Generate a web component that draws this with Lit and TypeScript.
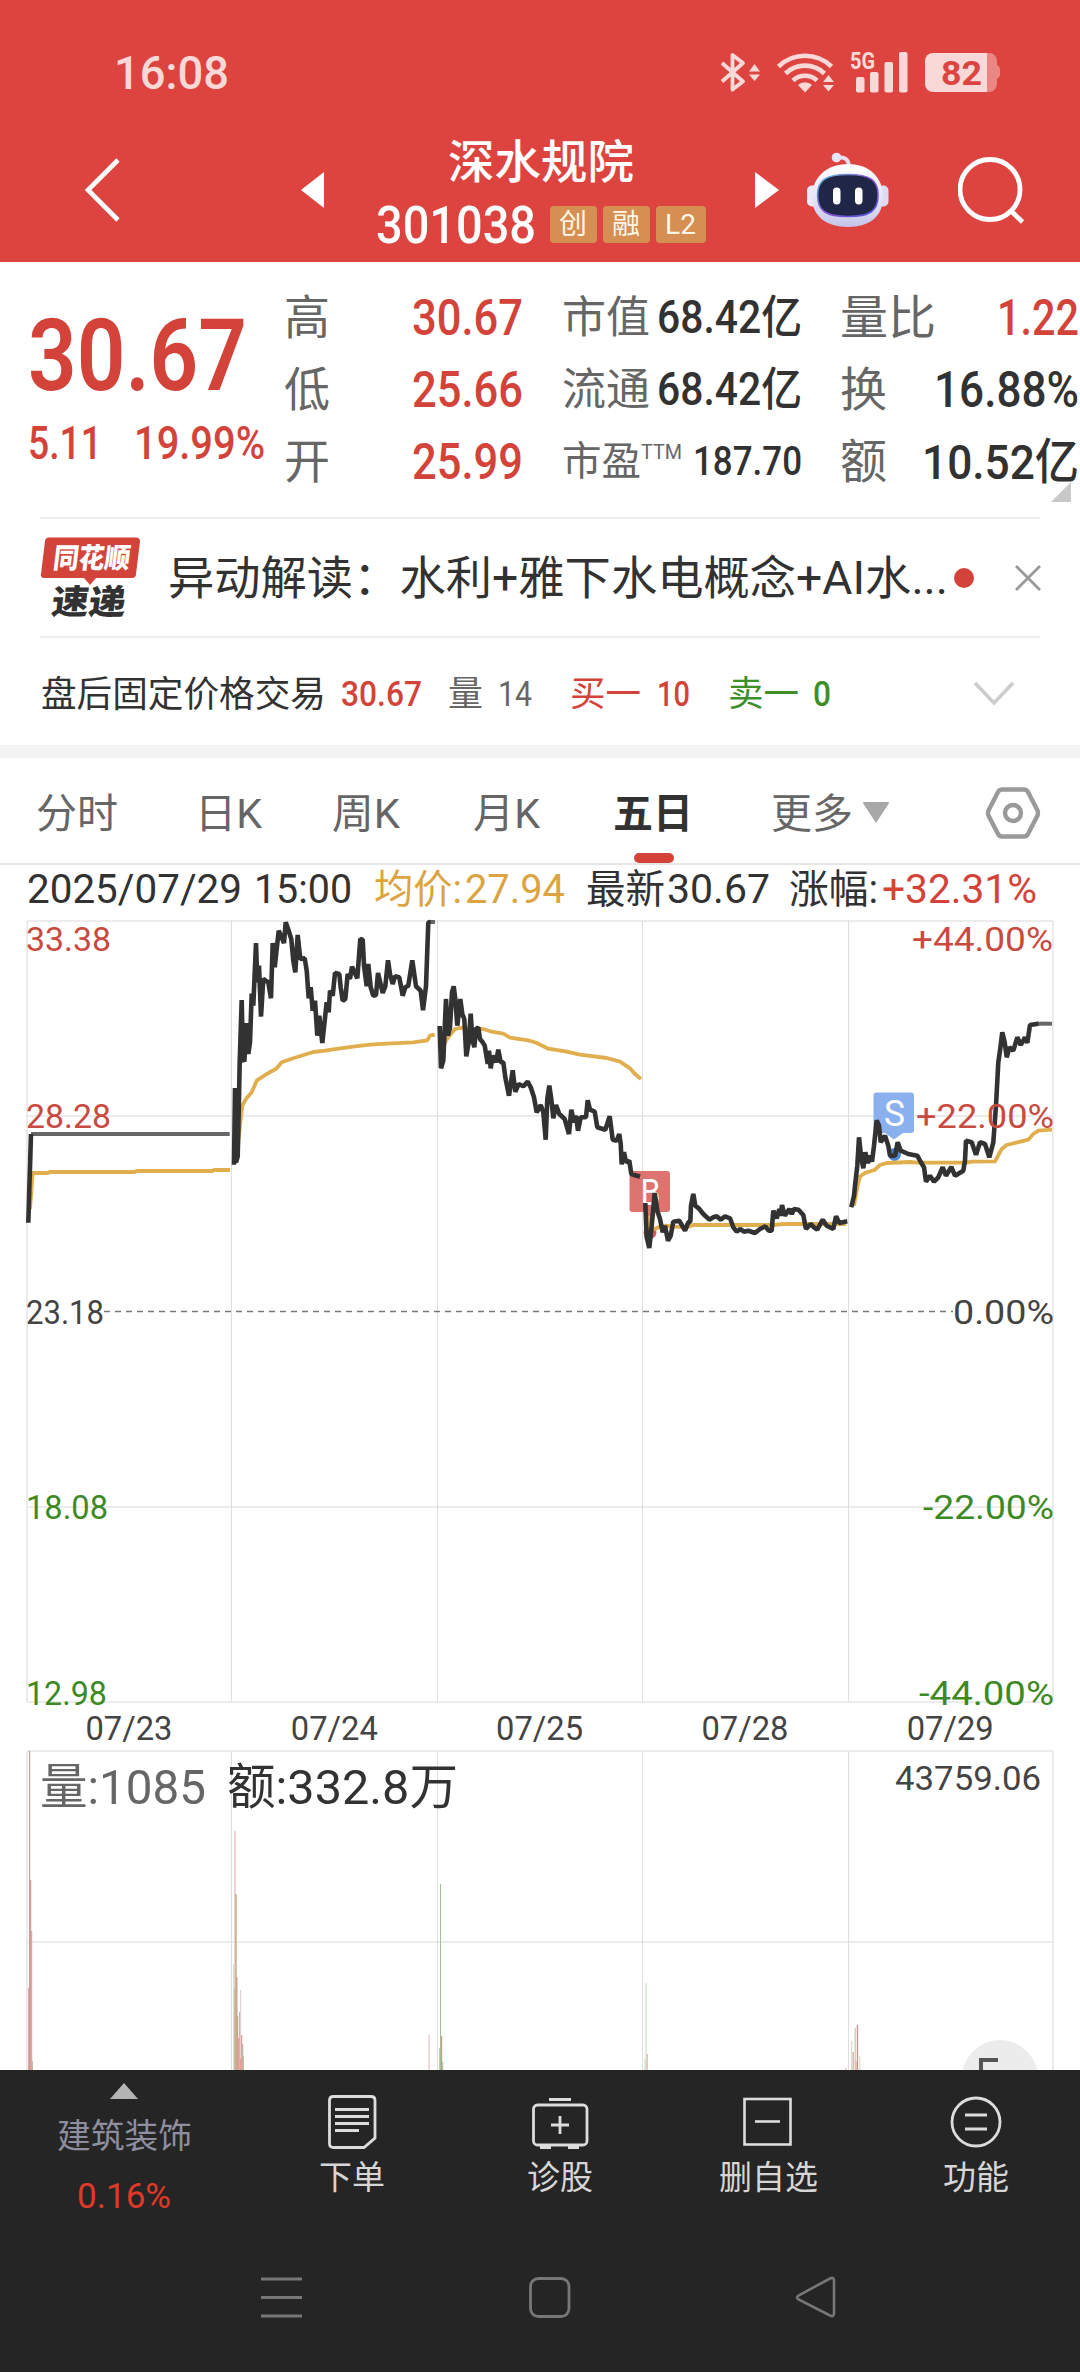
import { LitElement, html, svg, css } from "lit";
import { customElement } from "lit/decorators.js";

/** One line of text set to an exact advance width. */
const fit = (s: string, w: number, size: number, cls = "") => html`<svg class="fit ${cls}" width=${w} height=${size} viewBox="0 0 ${w} ${size}">
  <text x="0" y=${size * 0.855} font-size=${size} textLength=${w} lengthAdjust="spacingAndGlyphs">${s}</text>
</svg>`;

/** Samples are kept in thirds of a pixel, relative to an origin. */
const trace = (ox: number, oy: number, pts: string) =>
  pts
    .trim()
    .split(/\s+/)
    .map((p) => {
      const [x, y] = p.split(",").map(Number);
      return `${(ox + x / 3).toFixed(1)},${(oy + y / 3).toFixed(1)}`;
    })
    .join(" ");

const PRICE = [
  trace(0, 900, "85,971 93,705"),
  trace(0, 900, `702,797 705,567 708,790 713,772 715,700 719,490 725,303 729,480 733,488 740,372 745,465 750,430 752,370
    755,284 760,320 768,132 772,250 777,200 783,353 790,240 797,245 805,250 813,298 818,132 824,205 830,150 836,95
    852,132 857,70 866,95 874,120 880,185 886,220 893,108 901,180 914,178 920,215 926,298 932,265 938,335 945,305
    952,410 958,350 967,432 974,365 980,310 986,340 990,275 998,290 1005,222 1018,225 1022,265 1028,305 1036,300
    1043,225 1050,240 1056,203 1072,238 1081,120 1088,122 1092,200 1100,262 1105,195 1112,265 1120,290 1128,288
    1134,222 1148,282 1156,262 1164,184 1170,225 1178,255 1185,232 1198,235 1208,290 1216,265 1225,260 1237,184
    1248,262 1262,275 1269,334 1278,262 1285,70 1292,69`),
  trace(420, 900, `59,381 63,508 70,485 78,300 84,410 90,385 96,280 101,262 106,300 112,380 121,300 127,345 133,360
    139,472 146,430 152,344 157,420 163,445 168,390 175,385 180,420 188,430 194,440 203,495 207,455 212,508 218,470
    228,490 235,452 242,490 250,490 256,535 267,590 278,514 286,578 296,555 310,562 323,548 332,565 342,595 350,640
    362,618 370,640 377,722 382,600 388,560 394,600 400,658 408,618 418,645 434,660 447,705 454,632 462,670 468,650
    474,695 482,655 498,655 503,604 510,632 524,638 532,685 556,692 569,652 578,722 590,725 598,705 602,735 605,796
    612,760 618,790 628,785 634,825 660,833`),
  trace(420, 900, `676,912 680,1015 688,1047 695,980 704,882 712,935 720,960 728,1000 735,980 744,1025 752,1010
    760,968 778,965 795,995 805,970 811,968 813,920 820,885 826,920 836,928 850,945 868,962 880,955 890,952 902,962
    915,952 930,958 940,985 950,998 960,990 972,998 985,995 1005,1002 1020,990 1036,982 1046,995 1055,995 1060,935
    1070,958 1078,930 1082,950 1086,918 1094,950 1108,930 1115,945 1122,930 1135,932 1150,948 1158,990 1172,975
    1182,985 1192,992 1208,962 1220,980 1240,990 1248,952 1258,972 1282,967`),
  trace(780, 980, `214,685 222,650 225,620 232,560 237,475 243,530 250,568 256,520 264,552 272,530 276,548 282,500
    290,424 297,440 302,490 315,470 325,500 330,530 345,530 353,490 362,515 385,525 412,530 420,545 432,565 438,608
    450,590 462,608 475,595 488,565 498,590 514,564 525,590 550,575 555,545 558,485 575,490 588,527 600,490 615,495
    628,535 640,490 648,380 655,250 660,215 667,160 674,190 680,235 688,205 700,215 712,175 722,198 735,175 742,192
    750,138 775,134`),
];
const FLAT = [trace(0, 900, "93,705 689,705"), trace(0, 900, "1285,69 1305,69"), trace(780, 980, "770,134 816,134")];
const AVERAGE = [
  trace(0, 900, "90,930 98,822 144,822 148,819 404,819 410,816 636,816 642,813 690,813"),
  trace(0, 900, `716,720 720,680 727,620 738,600 755,580 770,545 800,525 830,508 845,490 880,478 940,459 975,455
    1020,448 1060,443 1110,437 1160,434 1240,430 1282,424 1290,410 1304,407`),
  trace(420, 900, `66,450 78,425 90,408 105,390 125,386 160,390 190,390 215,398 250,404 270,416 325,424 350,432
    385,449 440,458 480,467 560,477 600,488 630,508 645,525 663,540`),
  trace(420, 900, "685,950 690,985 705,990 715,985 735,980 760,983 800,985 820,978 1060,978 1090,975 1278,975"),
  trace(780, 980, `222,680 232,625 240,592 255,582 285,572 300,558 320,552 390,549 410,551 560,551 575,548 645,547
    665,510 680,498 745,482 760,465 775,455 816,452`),
];

/** x, width, top, colour */
const VOLUME: [number, number, number, string][] = [
  [28, 1.2, 1989, "#e2a9a7"], [29, 1.2, 1752, "#c79b9a"], [30, 1.2, 1881, "#dc9b98"], [31, 1.2, 1932, "#e2a5a2"], [32, 1, 2062, "#b5b9a8"],
  [233.3, 1, 1965, "#c5d6bf"], [234, 1.8, 1832, "#f0cfce"], [235.2, 1.5, 1895, "#bfae8d"], [234.2, 1.2, 1990, "#bdb793"],
  [236.4, 1, 1978, "#c98f80"], [237, 1.2, 2017, "#d0a385"], [238, 1.2, 2039, "#e5a19d"], [239.2, 1, 2013, "#d89a95"],
  [239.9, 1.3, 1991, "#e5cfd0"], [240, 2, 2060, "#ea9b98"], [241, 1.3, 2036, "#dfa09b"], [242.3, 1, 2045, "#a8ab92"], [243, 1, 2057, "#bfb6a3"],
  [428.3, 1.6, 2036, "#f0cfce"], [439.2, 1, 2049, "#a9c3a0"], [440, 1.1, 1885, "#a3c09a"], [441, 1.2, 2037, "#bf9f80"], [442, 1.2, 2063, "#a9c3a0"],
  [644.6, 1, 2060, "#b9cfb2"], [645.4, 1.3, 1984, "#cfdfc9"], [646.6, 1.2, 2055, "#e3b3a5"],
  [851.2, 1, 2042, "#c4dabd"], [852.6, 1.2, 2053, "#dba39c"], [854.6, 1.2, 2029, "#b9cfae"], [855.6, 1, 2062, "#e9a5a2"],
  [856.8, 1.3, 2026, "#c78f88"], [859.3, 1, 2057, "#c4dabd"], [845.5, 1, 2069, "#d9a9a7"],
];

const label = (x: number, cy: number, w: number, size: number, s: string, cls: string) =>
  svg`<text class=${cls} x=${x} y=${cy + size * 0.357} font-size=${size} textLength=${w} lengthAdjust="spacingAndGlyphs">${s}</text>`;

@customElement("price-chart")
class PriceChart extends LitElement {
  static styles = css`
    :host { display: block; height: 1162px; }
    svg { display: block; font-family: Roboto, "Noto Sans CJK SC", sans-serif; }
    .grid { stroke: #e6e6e6; stroke-width: 1.6; fill: none; }
    .thin { stroke: #dedede; stroke-width: 1; }
    .zero { stroke: #777; stroke-width: 1.3; stroke-dasharray: 6 5; }
    .price { stroke: #323232; stroke-width: 4.6; fill: none; stroke-linejoin: bevel; }
    .flat { stroke: #666; stroke-width: 4; fill: none; }
    .avg { stroke: #e0ae4c; stroke-width: 3.8; fill: none; stroke-linejoin: round; }
    .up { fill: #c94a40; }
    .down { fill: #3d8a25; }
    .mid { fill: #444; }
    .gray { fill: #666; }
    .dark { fill: #323232; }
    .mark { fill: #fff; }
    .buy { fill: #dd7470; }
    .buydot { fill: #d05a5c; }
    .sell { fill: #8ab0ee; }
    .selldot { fill: #4f86d6; }
    .float { fill: #ececec; }
    .floatmark { stroke: #555; stroke-width: 4; fill: none; }
  `;
  render() {
    return html`<svg width="1080" height="1162" viewBox="0 909 1080 1162">
      <g class="grid">
        <path d="M27 922H1053M27 1117H1053M27 1508H1053M27 1703H1053M27 922V1703M1053 922V1703" />
        <path d="M27 1752H1053M27 1943H1053M27 1752V2071M1053 1752V2071" />
      </g>
      <g class="thin">
        ${[231.5, 437.5, 642.5, 848.5].map((x) => svg`<path d="M${x} 922V1703M${x} 1752V2071" />`)}
      </g>
      <path class="zero" d="M104 1312.5H953" />
      ${VOLUME.map(([x, w, top, c]) => svg`<rect x=${x} y=${top} width=${w} height=${2071 - top} fill=${c} />`)}

      <path class="buy" d="M632.5 1172H667a3 3 0 0 1 3 3V1210a3 3 0 0 1-3 3H655L649.500 1219 644 1213H632.500a3 3 0 0 1-3-3V1175a3 3 0 0 1 3-3Z" />
      <circle class="buydot" cx="650" cy="1233.500" r="6.500" />
      ${label(640.5, 1193, 20, 36, "B", "mark")}
      <path class="sell" d="M876.500 1093.500H911a3 3 0 0 1 3 3V1131a3 3 0 0 1-3 3H903L894 1140.500 885 1134H876.500a3 3 0 0 1-3-3V1096.500a3 3 0 0 1 3-3Z" />
      <circle class="selldot" cx="894.500" cy="1155.500" r="6.500" />
      ${label(884, 1114, 21, 36, "S", "mark")}

      ${AVERAGE.map((p) => svg`<polyline class="avg" points=${p} />`)}
      ${FLAT.map((p) => svg`<polyline class="flat" points=${p} />`)}
      ${PRICE.map((p) => svg`<polyline class="price" points=${p} />`)}

      ${label(26, 939.5, 85, 34, "33.38", "up")} ${label(26, 1116.5, 85, 34, "28.28", "up")}
      ${label(26, 1312.5, 78, 34, "23.18", "mid")} ${label(26, 1508, 82, 34, "18.08", "down")}
      ${label(26, 1694, 81, 34, "12.98", "down")}
      ${label(912, 939.5, 141, 34, "+44.00%", "up")} ${label(916, 1116.5, 138, 34, "+22.00%", "up")}
      ${label(953, 1312.5, 101, 34, "0.00%", "mid")} ${label(923, 1508, 131, 34, "-22.00%", "down")}
      ${label(919, 1694, 135, 34, "-44.00%", "down")}
      ${["07/23", "07/24", "07/25", "07/28", "07/29"].map((d, i) => label(85.5 + i * 205.3, 1729, 87, 33, d, "mid"))}
      ${label(40, 1788, 166, 49, "量:1085", "gray")} ${label(227, 1788, 231, 49, "额:332.8万", "dark")}
      ${label(895, 1779, 146, 34, "43759.06", "mid")}
      <circle class="float" cx="1000" cy="2079" r="38" />
      <path class="floatmark" d="M998 2061H981V2071" />
    </svg>`;
  }
}

@customElement("app-root")
class AppRoot extends LitElement {
  static styles = css`
    :host { display: block; width: 1080px; height: 2373px; overflow: hidden; background: #fff; color: #323232;
      font-family: Roboto, "Noto Sans CJK SC", sans-serif; }
    svg { display: block; flex: none; }
    .fit { fill: currentColor; overflow: visible; }
    .icons { overflow: visible; }
    .med { font-weight: 500; }
    .semi { font-weight: 600; }
    .bold { font-weight: 700; }
    .red { color: #d3433a; }
    .gray { color: #666; }
    .green { color: #3d8f2a; }
    .gold { color: #dba441; }
    .row { display: grid; align-items: center; }

    header { height: 262px; background: #dd4440; color: #fff; }
    .status { height: 110px; padding-top: 35px; box-sizing: border-box; grid-template-columns: 606px 1fr; padding-left: 114px; color: #f9d9d8; }
    .nav { height: 152px; grid-template-columns: 217px 74px 380px 52px 151px 1fr; padding-left: 84px; padding-top: 8px; box-sizing: border-box; }
    .title { display: flex; flex-direction: column; align-items: center; gap: 14px; padding-right: 49px; margin-top: 8px; }
    .code { display: flex; align-items: center; gap: 6px; }
    .code .fit { margin-right: 8px; }
    .badge { height: 37px; min-width: 47px; border-radius: 4px; background: #d58f53; color: #fff6e6;
      display: flex; align-items: center; justify-content: center; font-size: 28px; line-height: 37px; }
    .badge.wide { min-width: 50px; }

    .quote { height: 255px; display: grid; grid-template-columns: 256px 278px 278px 240px; padding-left: 28px; box-sizing: border-box; position: relative; }
    .lead { padding-top: 42px; display: flex; flex-direction: column; gap: 15px; }
    .change { grid-template-columns: 106px 1fr; }
    .col { padding-top: 19px; }
    .col .row { height: 72px; }
    .c1 .row { grid-template-columns: 128px 110px; }
    .c2 .row { grid-template-columns: auto auto; justify-content: space-between; width: 240px; }
    .c3 .row { grid-template-columns: auto auto; justify-content: space-between; width: 239px; }
    .pe { display: flex; align-items: flex-start; }
    .corner { position: absolute; right: 9px; bottom: 15px; }

    .news { margin: 0 40px; height: 117px; border-top: 2px solid #eee; border-bottom: 2px solid #eee;
      grid-template-columns: 128px 786px 61px 1fr; }
    .after { height: 107px; padding-left: 41px; padding-top: 4px; box-sizing: border-box;
      grid-template-columns: 300px 107px 50px 72px 87px 71px 85px 160px 1fr; }
    .band { height: 13px; background: #f4f4f4; }
    .tabs { height: 107px; box-sizing: border-box; border-bottom: 2px solid #e6e6e6; padding: 5px 0 0 36px;
      grid-template-columns: 159px 137px 141px 140px 158px 92px 122px 1fr; position: relative; color: #666; }
    .current { color: #323232; }
    .under { position: absolute; left: 634px; bottom: 0; width: 40px; height: 10px; border-radius: 5px; background: #d3433a; }
    .info { height: 43px; padding-left: 27px; padding-top: 3px; box-sizing: border-box;
      grid-template-columns: 227px 120px 91px 121px 81px 122px 93px 1fr; }

    footer { height: 302px; background: #252525; color: #d6d6d6; }
    .actions { display: grid; grid-template-columns: 248px 208px 208px 208px 208px; height: 130px; }
    .sector { display: flex; flex-direction: column; align-items: center; color: #8e8e9e; padding-top: 13px; }
    .sector .name { margin-top: 20px; }
    .sector .pct { margin-top: 25px; color: #e0392a; }
    .action { display: flex; flex-direction: column; align-items: center; padding-top: 24px; gap: 11px; }
    .system { display: grid; grid-template-columns: 268px 267px 1fr; padding: 74px 0 0 259px; }
  `;

  render() {
    return html`
      <header>
        <div class="row status">
          ${fit("16:08", 115, 46, "med")}
          <svg class="icons" width="286" height="46" viewBox="720 50 286 46">
            <g fill="none" stroke="#f9d9d8" stroke-width="3.800">
              <path d="M722 63 743 81.500 732.500 89.500V55L743 63 722 81.500" stroke-linejoin="round" />
              <path d="M778.500 66.500a38 38 0 0 1 53 0M785.500 73.500a28 28 0 0 1 39 0M793 80.500a17.500 17.500 0 0 1 24 0" stroke-width="4.600" />
            </g>
            <g fill="#f9d9d8">
              <path d="M749 71.500 754.500 64 760 71.500ZM749 74.500H760L754.500 81Z" />
              <path d="M798 85a10 10 0 0 1 14 0L805 92.500Z" />
              <path d="M823 82 828.500 75 834 82ZM823 85H834L828.500 91.500Z" />
              <rect x="856" y="77" width="8.500" height="15.500" rx="2" /><rect x="870" y="72" width="8.500" height="20.500" rx="2" />
              <rect x="884.500" y="62" width="8.500" height="30.500" rx="2" /><rect x="899" y="52" width="8.500" height="40.500" rx="2" />
              <text x="850" y="68.500" font-size="24.500" font-weight="700" textLength="25" lengthAdjust="spacingAndGlyphs">5G</text>
              <path d="M933 53H987V92H933a8 8 0 0 1-8-8V61a8 8 0 0 1 8-8Z" />
            </g>
            <path fill="#ea8684" d="M987 53h2a8 8 0 0 1 8 8v4a5 5 0 0 1 3 4v6a5 5 0 0 1-3 4v5a8 8 0 0 1-8 8h-2Z" />
            <text x="941" y="84.500" font-size="34" font-weight="700" fill="#dd4440" textLength="41" lengthAdjust="spacingAndGlyphs">82</text>
          </svg>
        </div>
        <div class="row nav">
          <svg width="38" height="66" viewBox="0 0 38 66"><path d="M34 3 4 33 34 63" fill="none" stroke="#fff" stroke-width="4.600" /></svg>
          <svg width="24" height="38" viewBox="0 0 24 38"><path d="M23 1V37L0 19Z" fill="#fff" /></svg>
          <div class="title">
            ${fit("深水规院", 186, 46, "med")}
            <div class="code">
              ${fit("301038", 160, 51, "med")}
              <span class="badge">创</span><span class="badge">融</span><span class="badge wide">L2</span>
            </div>
          </div>
          <svg width="24" height="38" viewBox="0 0 24 38"><path d="M0 1V37L24 19Z" fill="#fff" /></svg>
          <svg width="82" height="76" viewBox="807 150 82 76">
            <defs>
              <linearGradient id="shell" x1="0" y1="0" x2="0" y2="1"><stop offset="0" stop-color="#fff" /><stop offset=".6" stop-color="#e2e2f4" /><stop offset="1" stop-color="#c3c4e8" /></linearGradient>
              <linearGradient id="rim" x1="0" y1="0" x2="1" y2="1"><stop offset="0" stop-color="#5cc6d8" /><stop offset=".5" stop-color="#8d4fd0" /><stop offset="1" stop-color="#4a55d8" /></linearGradient>
            </defs>
            <path d="M837 156C845 154 849 158 848.500 164" fill="none" stroke="#e9dff0" stroke-width="4" />
            <circle cx="836.500" cy="155.500" r="4.800" fill="#e6e6f4" />
            <rect x="807" y="183.500" width="12" height="21" rx="5" fill="#eceaf8" /><rect x="876.500" y="183.500" width="12" height="21" rx="5" fill="#dcdcf6" />
            <path d="M848 162C870 162 883 176 883 195C883 214 870 225 848 225S812 214 812 195C812 176 826 162 848 162Z" fill="url(#shell)" />
            <path d="M848 172.500C870 172.500 878 178 878 193C878 209 870 214.500 848 214.500S817.500 209 817.500 193C817.500 178 826 172.500 848 172.500Z" fill="#1f2648" stroke="url(#rim)" stroke-width="1.600" />
            <rect x="833" y="185.500" width="7.500" height="17" rx="3.700" fill="#fff" /><rect x="855" y="185.500" width="7.500" height="17" rx="3.700" fill="#fff" />
          </svg>
          <svg width="70" height="70" viewBox="956 155 70 70"><g fill="none" stroke="#fff" stroke-width="4.800"><circle cx="988" cy="189.500" r="30" /><path d="M1009 211 1020.500 222" /></g></svg>
        </div>
      </header>

      <section class="quote">
        <div class="lead red">
          ${fit("30.67", 219, 100, "semi")}
          <div class="row change">${fit("5.11", 74, 47, "med")}${fit("19.99%", 131, 47, "med")}</div>
        </div>
        <div class="col c1">
          <div class="row"><span class="gray">${fit("高", 46, 47)}</span><span class="red">${fit("30.67", 111, 50, "med")}</span></div>
          <div class="row"><span class="gray">${fit("低", 46, 47)}</span><span class="red">${fit("25.66", 111, 50, "med")}</span></div>
          <div class="row"><span class="gray">${fit("开", 46, 47)}</span><span class="red">${fit("25.99", 111, 50, "med")}</span></div>
        </div>
        <div class="col c2">
          <div class="row"><span class="gray">${fit("市值", 88, 44)}</span>${fit("68.42亿", 145, 46, "med")}</div>
          <div class="row"><span class="gray">${fit("流通", 88, 44)}</span>${fit("68.42亿", 145, 46, "med")}</div>
          <div class="row"><span class="gray pe">${fit("市盈", 79, 39.5)}${fit("TTM", 41, 21)}</span>${fit("187.70", 109, 40, "med")}</div>
        </div>
        <div class="col c3">
          <div class="row"><span class="gray">${fit("量比", 96, 47)}</span><span class="red">${fit("1.22", 82, 50, "med")}</span></div>
          <div class="row"><span class="gray">${fit("换", 47, 47)}</span>${fit("16.88%", 145, 50, "med")}</div>
          <div class="row"><span class="gray">${fit("额", 47, 47)}</span>${fit("10.52亿", 157, 49, "med")}</div>
        </div>
        <svg class="corner" width="20" height="20" viewBox="0 0 20 20"><path d="M20 0V20H0Z" fill="#c8c8c8" /></svg>
      </section>

      <section class="row news">
        <svg width="102" height="84" viewBox="40 536 102 84">
          <path d="M49 537.500H136a4 4 0 0 1 4 4L136 574a4 4 0 0 1-4 4H96L90 585 84 578H44a3 3 0 0 1-3-4L45 541a4 4 0 0 1 4-3.500Z" fill="#d3433a" />
          <g transform="skewX(-7)" font-family="Noto Sans CJK SC" font-weight="900">
            <text x="122" y="568.500" font-size="28" fill="#fff" textLength="77" lengthAdjust="spacingAndGlyphs">同花顺</text>
            <text x="126" y="614.500" font-size="34" fill="#323232" textLength="74" lengthAdjust="spacingAndGlyphs">速递</text>
          </g>
        </svg>
        ${fit("异动解读：水利+雅下水电概念+AI水...", 780, 46)}
        <svg width="20" height="20" viewBox="0 0 20 20"><circle cx="10" cy="10" r="10" fill="#d3433a" /></svg>
        <svg width="26" height="26" viewBox="0 0 26 26"><path d="M1 1 25 25M25 1 1 25" stroke="#999" stroke-width="2.800" /></svg>
      </section>

      <section class="row after">
        ${fit("盘后固定价格交易", 285, 36)}
        <span class="red">${fit("30.67", 81, 35, "med")}</span>
        <span class="gray">${fit("量", 35, 35)}</span><span class="gray">${fit("14", 34, 35)}</span>
        <span class="red">${fit("买一", 71, 35.5)}</span><span class="red">${fit("10", 33, 35, "med")}</span>
        <span class="green">${fit("卖一", 71, 35.5)}</span><span class="green">${fit("0", 18, 35, "med")}</span>
        <svg width="42" height="26" viewBox="0 0 42 26"><path d="M2 2 21 22 40 2" fill="none" stroke="#ccc" stroke-width="3.600" /></svg>
      </section>
      <div class="band"></div>

      <nav class="row tabs">
        ${fit("分时", 82, 41)}${fit("日K", 67, 41)}${fit("周K", 68, 41)}${fit("月K", 67, 41)}
        <span class="current">${fit("五日", 80, 41, "bold")}</span>
        ${fit("更多", 82, 41)}
        <svg width="26" height="22" viewBox="0 0 26 22"><path d="M1 0H25a1 1 0 0 1 .8 1.500L13 21 .2 1.500A1 1 0 0 1 1 0Z" fill="#a8a8a8" /></svg>
        <svg width="56" height="54" viewBox="0 0 56 54"><g fill="none" stroke="#999" stroke-width="4.400"><path d="M17 3.500H39Q41.500 3.500 43 6L52.500 24.500Q53.500 27 52.500 29.500L43 48Q41.500 50.500 39 50.500H17Q14.500 50.500 13 48L3.500 29.500Q2.500 27 3.500 24.500L13 6Q14.500 3.500 17 3.500Z" /><circle cx="28" cy="27" r="8" /></g></svg>
        <i class="under"></i>
      </nav>

      <section class="row info">
        ${fit("2025/07/29", 215, 41)}${fit("15:00", 98, 41)}
        <span class="gold">${fit("均价:", 88, 40)}</span><span class="gold">${fit("27.94", 100, 41)}</span>
        ${fit("最新", 79, 40)}${fit("30.67", 103, 41)}
        ${fit("涨幅:", 89, 40)}<span class="red">${fit("+32.31%", 155, 41)}</span>
      </section>

      <price-chart></price-chart>

      <footer>
        <div class="actions">
          <div class="sector">
            <svg width="28" height="16" viewBox="0 0 28 16"><path d="M0 16 14 0 28 16Z" fill="#b4b4b4" /></svg>
            <span class="name">${fit("建筑装饰", 135, 34)}</span>
            <span class="pct">${fit("0.16%", 94, 35)}</span>
          </div>
          <div class="action">
            <svg width="60" height="56" viewBox="322 2095 60 56"><g fill="none" stroke="#dcdcdc" stroke-width="2.800"><path d="M333.500 2097.500H371Q375 2097.500 375 2101.500V2139L364 2148.500H333.500Q329.500 2148.500 329.500 2144.500V2101.500Q329.500 2097.500 333.500 2097.500Z" /><path d="M335 2110.500H369M335 2117.500H369M335 2124.500H369M335 2131.500H359" /></g></svg>
            ${fit("下单", 66, 33)}
          </div>
          <div class="action">
            <svg width="60" height="56" viewBox="530 2095 60 56"><g fill="none" stroke="#dcdcdc" stroke-width="2.800"><rect x="533.500" y="2106" width="53.500" height="40" rx="4" /><path d="M549 2100.500H571M551 2126H569M560 2117V2135M540 2148.500H551M568 2148.500H579" /></g></svg>
            ${fit("诊股", 66, 33)}
          </div>
          <div class="action">
            <svg width="60" height="56" viewBox="738 2095 60 56"><g fill="none" stroke="#dcdcdc" stroke-width="2.600"><rect x="744.500" y="2100" width="46" height="45.500" /><path d="M755 2122.500H780" /></g></svg>
            ${fit("删自选", 99, 33)}
          </div>
          <div class="action">
            <svg width="60" height="56" viewBox="946 2095 60 56"><g fill="none" stroke="#dcdcdc" stroke-width="2.800"><circle cx="976" cy="2123" r="24" /><path d="M965 2116H987M965 2130H987" /></g></svg>
            ${fit("功能", 66, 33)}
          </div>
        </div>
        <div class="system">
          <svg width="45" height="46" viewBox="259 2275 45 46"><path d="M261 2280H302M261 2298.500H302M261 2317H302" stroke="#777" stroke-width="3" /></svg>
          <svg width="45" height="46" viewBox="527 2275 45 46"><rect x="530.500" y="2279.500" width="38.500" height="38" rx="8" fill="none" stroke="#777" stroke-width="2.800" /></svg>
          <svg width="45" height="46" viewBox="794 2275 45 46"><path d="M834 2282V2314Q834 2318.500 830 2316.500L798.500 2300.500Q795.500 2298.500 798.500 2296.500L830 2279.500Q834 2277.500 834 2282Z" fill="none" stroke="#777" stroke-width="2.600" /></svg>
        </div>
      </footer>
    `;
  }
}
